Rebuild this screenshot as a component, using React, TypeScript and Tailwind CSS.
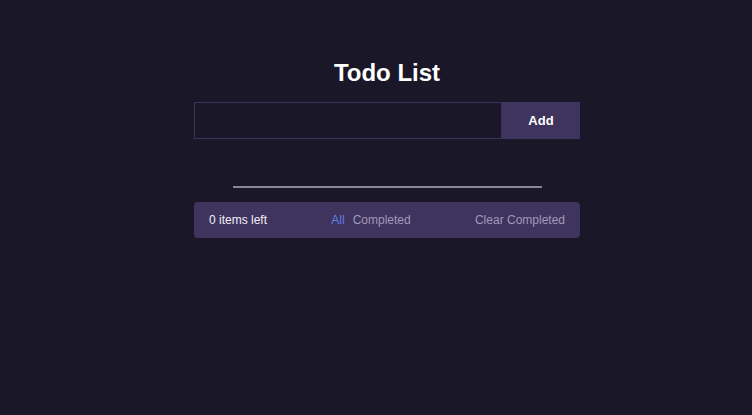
import React, { useState } from 'react';

interface Todo {
    id: number;
    text: string;
    completed: boolean;
}

const App: React.FC = () => {
    const [todos, setTodos] = useState<Todo[]>([]);
    const [input, setInput] = useState('');
    const [filter, setFilter] = useState<'all' | 'completed'>('all');

    const addTodo = () => {
        if (!input.trim()) return;
        setTodos([...todos, { id: Date.now(), text: input, completed: false }]);
        setInput('');
    };

    const itemsLeft = todos.filter(t => !t.completed).length;
    const visible = filter === 'all' ? todos : todos.filter(t => t.completed);

    return (
        <div className="min-h-[415px] w-full bg-[#1a1729] font-['Liberation_Sans',Arial,sans-serif]">
            <div className="flex justify-center pl-[22px] pt-[57px]">
                <div className="flex w-[386px] flex-col">
                    <h1 className="mb-[13px] h-8 text-center text-[24px] font-bold leading-8 text-white">Todo List</h1>

                    {/* 입력 영역 */}
                    <div className="flex h-[37px]">
                        <input
                            value={input}
                            onChange={e => setInput(e.target.value)}
                            onKeyDown={e => e.key === 'Enter' && addTodo()}
                            className="h-full flex-1 border border-[#3b3359] bg-[#1a1729] px-3 text-[13px] text-white outline-none"
                        />
                        <button
                            onClick={addTodo}
                            className="h-full w-[78px] bg-[#3f345e] text-[13px] font-bold text-white"
                        >
                            Add
                        </button>
                    </div>

                    {/* 목록 */}
                    <ul className="mx-auto mt-[47px] w-[309px] border-b-2 border-[#8a8699]">
                        {visible.map(todo => (
                            <li key={todo.id} className="py-2 text-[13px] text-white">{todo.text}</li>
                        ))}
                    </ul>

                    {/* 하단 바 */}
                    <div className="mt-[14px] flex h-9 items-center justify-between rounded-[4px] bg-[#3e345e] px-[15px] text-[12px]">
                        <span className="text-[#f2f0f7]">{itemsLeft} items left</span>
                        <div className="flex gap-2">
                            <button
                                onClick={() => setFilter('all')}
                                className={filter === 'all' ? 'text-[#5e7fe6]' : 'text-[#a19bb9]'}
                            >
                                All
                            </button>
                            <button
                                onClick={() => setFilter('completed')}
                                className={filter === 'completed' ? 'text-[#5e7fe6]' : 'text-[#a19bb9]'}
                            >
                                Completed
                            </button>
                        </div>
                        <button
                            onClick={() => setTodos(todos.filter(t => !t.completed))}
                            className="text-[#a19bb9]"
                        >
                            Clear Completed
                        </button>
                    </div>
                </div>
            </div>
        </div>
    );
};

export default App;
